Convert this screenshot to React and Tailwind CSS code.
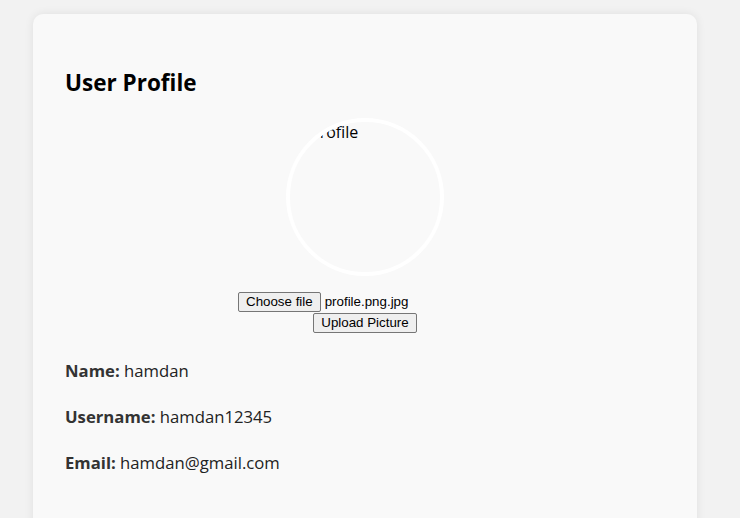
const font = { fontFamily: '"Open Sans", "Noto Sans", sans-serif' };
const ui = { fontFamily: '"Liberation Sans", Arial, sans-serif' };

export default function App() {
  return (
    <div className="h-[518px] overflow-hidden bg-[#f2f2f2] pt-[14px] px-[33px]" style={font}>
      <div className="w-[664px] bg-[#f9f9f9] rounded-[10px] shadow-[0_0_10px_rgba(0,0,0,0.08)] px-[32px] pt-[54px] pb-[60px] min-h-[540px]">
        <h2 className="text-[22.5px] font-bold text-black leading-[30px]">User Profile</h2>

        <div className="flex flex-col items-center mt-[20px]">
          <div className="w-[158px] h-[158px] rounded-full border-4 border-white overflow-hidden">
            <span className="block pl-[20px] text-[16px] text-black leading-[20px]">Profile</span>
          </div>

          <div className="w-[254px] mt-[16px] flex items-center gap-[4px] text-[13.33px]" style={ui}>
            <button className="bg-[#efefef] border border-[#767676] rounded-[2px] px-[7px] h-[20px] leading-[16px] text-black">Choose file</button>
            <span className="text-black">profile.png.jpg</span>
          </div>
          <button
            className="mt-[1px] bg-[#efefef] border border-[#767676] rounded-[2px] px-[7px] h-[20px] leading-[16px] text-[13.33px] text-black"
            style={ui}
          >
            Upload Picture
          </button>
        </div>

        <div className="mt-[26px] flex flex-col gap-[22px] text-[16.7px] text-[#222] leading-[24px]">
          <p><strong className="text-[#333]">Name:</strong> hamdan</p>
          <p><strong className="text-[#333]">Username:</strong> hamdan12345</p>
          <p><strong className="text-[#333]">Email:</strong> hamdan@gmail.com</p>
        </div>
      </div>
    </div>
  );
}
